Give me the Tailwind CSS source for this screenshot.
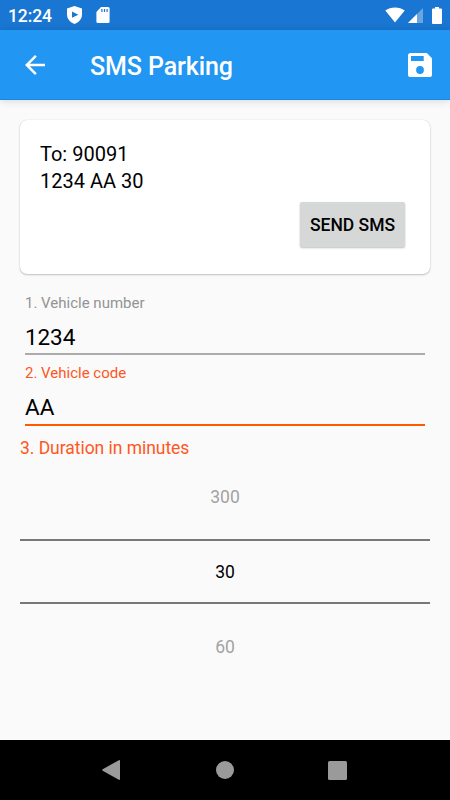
<!DOCTYPE html>
<html lang="en">
  <head>
    <meta charset="UTF-8" />
    <meta name="viewport" content="width=device-width, initial-scale=1.0" />
    <title>SMS Parking</title>
    <script src="https://cdn.jsdelivr.net/npm/@tailwindcss/browser@4"></script>
  </head>
  <body class="h-screen flex flex-col overflow-hidden bg-[#fafafa] text-black font-['Roboto',sans-serif]">
    <!-- Status bar -->
    <div class="h-[30px] shrink-0 flex items-center bg-[#1976d2] text-white pl-2 pr-2">
      <span class="w-[59px] mt-px text-[17.5px] leading-[30px] font-medium tracking-[-0.1px]">12:24</span>
      <svg class="w-[15px] h-[18px]" viewBox="0 0 15 18">
        <path fill="#fff" d="M7.5 0 15 2.6V8.6C15 13 11.8 16.6 7.5 18 3.2 16.6 0 13 0 8.6V2.6z" />
        <path fill="#1976d2" d="M5 5.6v6.2l6.3-3.1z" />
      </svg>
      <svg class="ml-[13.5px] w-[14px] h-4" viewBox="0 0 14 16">
        <path fill="#fff" d="M5 0h7.2Q13.6 0 13.6 1.5v13Q13.6 16 12.2 16H1.8Q.4 16 .4 14.5V5z" />
        <path stroke="#1976d2" stroke-width="1.2" d="M5.9 2v3M8.5 2v3M11.1 2v3" />
      </svg>
      <svg class="ml-auto w-5 h-4" viewBox="0 0 20 16">
        <path fill="#fff" d="M10 15.5.3 3.6C5.5-.6 14.5-.6 19.7 3.6z" />
      </svg>
      <svg class="ml-[3px] w-[15px] h-[15px]" viewBox="0 0 15 15">
        <path fill="#fff" fill-opacity=".35" d="M15 0v15H0z" />
        <path fill="#fff" d="M9 6v9H0z" />
      </svg>
      <svg class="ml-[9px] w-[10px] h-[17px]" viewBox="0 0 10 17">
        <path fill="#fff" d="M3 0h4v1.6h2Q10 1.6 10 2.6V16q0 1-1 1H1q-1 0-1-1V2.6Q0 1.6 1 1.6h2z" />
      </svg>
    </div>

    <!-- App bar -->
    <header class="relative z-10 h-[70px] shrink-0 flex items-center bg-[#2196f3] border-b border-[#1588e5] text-white pl-5 pr-[18px] shadow-[0_1px_8px_rgba(0,0,0,0.14)]">
      <button aria-label="Back">
        <svg class="w-[30px] h-[30px]" viewBox="0 0 24 24" fill="currentColor">
          <path d="M20 11H7.83l5.59-5.59L12 4l-8 8 8 8 1.41-1.41L7.83 13H20v-2z" />
        </svg>
      </button>
      <h1 class="ml-10 mt-1 text-[25px] leading-[30px] font-medium tracking-[-0.1px]">SMS Parking</h1>
      <button class="ml-auto" aria-label="Save">
        <svg class="w-6 h-6" viewBox="0 0 24 24">
          <path fill="#fff" d="M2.6 0H18.8L24 5.2V21.4Q24 24 21.4 24H2.6Q0 24 0 21.4V2.6Q0 0 2.6 0z" />
          <path fill="#2196f3" d="M3 3h12.7v5H3z" />
          <circle fill="#2196f3" cx="12" cy="17" r="3.9" />
        </svg>
      </button>
    </header>

    <main class="flex-1 px-5 pt-5">
      <!-- Message preview -->
      <section class="h-[154px] flex flex-col bg-white rounded-[7px] px-5 pt-[21px] text-xl leading-[27px] shadow-[0_1px_2px_rgba(0,0,0,0.22),0_0_1px_rgba(0,0,0,0.2)]">
        <p>To: 90091</p>
        <p>1234 AA 30</p>
        <button class="self-end mt-[7px] mr-[5px] w-[105px] h-[45px] rounded-[2px] bg-[#d6d7d7] text-[17.5px] leading-[47px] font-medium shadow-[0_1px_2px_rgba(0,0,0,0.25)]">SEND SMS</button>
      </section>

      <!-- Vehicle fields -->
      <div class="mx-[5px] mt-[19px]">
        <div class="h-[62px] border-b-2 border-[#ababab]">
          <p class="text-[15px] leading-5 text-[#939393]">1. Vehicle number</p>
          <p class="mt-[9px] text-[22.5px] leading-[30px] tracking-[-0.1px]">1234</p>
        </div>
        <div class="mt-2 h-[63px] border-b-2 border-[#ff5a00]">
          <p class="text-[15px] leading-5 text-[#ff5722]">2. Vehicle code</p>
          <p class="mt-[9px] text-[22.5px] leading-[30px]">AA</p>
        </div>
      </div>
      <p class="mt-[11px] text-[17.5px] leading-[22px] tracking-[-0.04px] text-[#ff5722]">3. Duration in minutes</p>

      <!-- Duration picker -->
      <div class="text-center text-[17.5px]">
        <div class="h-[80px] pt-[27px] leading-[22px] text-[#a3a3a3]">300</div>
        <div class="h-[65px] border-y-2 border-[#777777] leading-[63px]">30</div>
        <div class="pt-[32px] leading-[22px] text-[#a3a3a3]">60</div>
      </div>
    </main>

    <!-- Navigation bar -->
    <nav class="h-[60px] shrink-0 flex items-center bg-black">
      <svg class="ml-[102px] w-[18px] h-5" viewBox="0 0 18 20">
        <path fill="#9a9a9a" d="M16.8.2Q18-.3 18 1v18q0 1.3-1.2.8L.7 10.8q-1-.8 0-1.6z" />
      </svg>
      <span class="ml-24 w-[18px] h-[18px] rounded-full bg-[#9a9a9a]"></span>
      <span class="ml-[94px] w-[19px] h-[19px] rounded-[1.5px] bg-[#9a9a9a]"></span>
    </nav>
  </body>
</html>
